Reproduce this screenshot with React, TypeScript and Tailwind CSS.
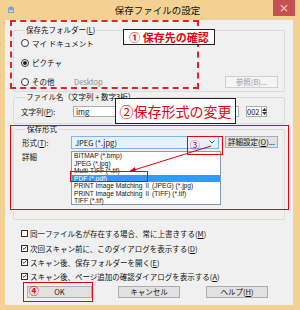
import React from "react";

function Radio({ checked }: { checked?: boolean }) {
  return (
    <span className="w-[8px] h-[8px] rounded-full border border-[#333] bg-white flex items-center justify-center shrink-0">
      {checked && <span className="w-[4px] h-[4px] rounded-full bg-[#222]" />}
    </span>
  );
}

function Check({ checked }: { checked?: boolean }) {
  return (
    <span className="w-[7px] h-[7px] border border-[#333] bg-white flex items-center justify-center shrink-0">
      {checked && (
        <svg width="6" height="6" viewBox="0 0 6 6">
          <path d="M0.8 3 L2.4 4.6 L5.3 1.2" stroke="#222" strokeWidth="1.1" fill="none" />
        </svg>
      )}
    </span>
  );
}

function Btn({ children, className = "" }: { children: React.ReactNode; className?: string }) {
  return (
    <div className={`h-[12px] flex items-center justify-center border bg-[#e1e1e1] border-[#adadad] text-[7.5px] leading-none ${className}`}>
      {children}
    </div>
  );
}

export default function App() {
  const items: React.ReactNode[] = [
    "BITMAP (*.bmp)",
    "JPEG (*.jpg)",
    "Multi-TIFF (*.tif)",
    "PDF (*.pdf)",
    <>
      PRINT Image Matching <span className="font-['Noto_Sans_CJK_JP',sans-serif] text-[6px]">Ⅱ</span> (JPEG) (*.jpg)
    </>,
    <>
      PRINT Image Matching <span className="font-['Noto_Sans_CJK_JP',sans-serif] text-[6px]">Ⅱ</span> (TIFF) (*.tif)
    </>,
    "TIFF (*.tif)",
  ];
  return (
    <div className="relative w-[300px] h-[310px] bg-[#f3d193] overflow-hidden text-[#111] font-['Noto_Sans_CJK_JP','Liberation_Sans',sans-serif]">
      {/* title bar */}
      <div className="h-[20px] flex items-start">
        <div className="pl-[7px] pt-[5px] w-[20px]">
          <svg width="8" height="9" viewBox="0 0 8 9">
            <path d="M1 8 L1 3 L4 1 L7 3 L7 8 Z" fill="#8aa2c0" />
            <path d="M2 6 L6 6" stroke="#fff" strokeWidth="1" />
          </svg>
        </div>
        <div className="flex-1 text-center text-[9.5px] leading-[20px] pl-[22px]">保存ファイルの設定</div>
        <div className="w-[22px] h-[16px] mr-[5px] bg-[#c75050] flex items-center justify-center text-white text-[10px] leading-none">
          ×
        </div>
      </div>

      {/* client */}
      <div className="ml-[5px] w-[288px] h-[285px] bg-[#f0f0f0] px-[8px] flex flex-col text-[7.5px] leading-[9px]">
        {/* group 1 */}
        <fieldset className="mt-[6px] border border-[#dcdcdc] rounded-[2px] pl-[7px] pr-[6px] pb-[1px]">
          <legend className="ml-[4px] px-[1px] leading-[8px]">保存先フォルダー(<u>L</u>)</legend>
          <div className="h-[18px] flex items-center gap-[3px]">
            <Radio />
            <span>マイ ドキュメント</span>
          </div>
          <div className="h-[21px] flex items-center gap-[3px]">
            <Radio checked />
            <span>ピクチャ</span>
          </div>
          <div className="h-[17px] flex items-center">
            <Radio />
            <span className="ml-[3px] w-[42px]">その他</span>
            <span className="text-[#8c8c8c]">Desktop</span>
            <Btn className="ml-auto w-[53px] bg-[#f4f4f4] border-[#d0d0d0] text-[#9a9a9a]">参照(B)...</Btn>
          </div>
        </fieldset>

        {/* group 2 */}
        <fieldset className="mt-[1px] border border-[#dcdcdc] rounded-[2px] pl-[7px] pr-[6px] pb-[5px]">
          <legend className="ml-[4px] px-[1px] leading-[8px]">ファイル名（文字列 + 数字3桁）</legend>
          <div className="h-[14px] mt-[3px] flex items-center">
            <span className="w-[52px]">文字列(<u>P</u>):</span>
            <div className="h-[11px] w-[166px] bg-white border border-[#abadb3] flex items-center pl-[2px]">img</div>
            <div className="ml-[7px] h-[11px] w-[21px] bg-white border border-[#abadb3] flex items-center">
              <span className="flex-1 text-right pr-[1px]">002</span>
              <div className="w-[7px] h-full border-l border-[#abadb3] flex flex-col items-center justify-center gap-[1px]">
                <svg width="5" height="3" viewBox="0 0 5 3">
                  <path d="M0 3 L2.5 0 L5 3 Z" fill="#333" />
                </svg>
                <svg width="5" height="3" viewBox="0 0 5 3">
                  <path d="M0 0 L2.5 3 L5 0 Z" fill="#333" />
                </svg>
              </div>
            </div>
          </div>
        </fieldset>

        {/* group 3 */}
        <fieldset className="mt-[1px] h-[95px] border border-[#dcdcdc] rounded-[2px] pl-[8px] pr-[6px]">
          <legend className="ml-[4px] px-[1px] leading-[8px]">保存形式</legend>
          <div className="h-[14px] mt-[2px] flex items-center">
            <span className="w-[49px]">形式(<u>T</u>):</span>
            <div className="h-[13px] w-[148px] bg-[#e5f1fb] border border-[#7eb4ea] flex items-center pl-[3px]">
              <span className="flex-1">JPEG (*.jpg)</span>
              <svg width="6" height="4" viewBox="0 0 6 4" className="mr-[3px]">
                <path d="M0.5 0.5 L3 3 L5.5 0.5" stroke="#333" strokeWidth="0.9" fill="none" />
              </svg>
            </div>
            <Btn className="ml-[6px] w-[53px]">詳細設定(<u>O</u>)...</Btn>
          </div>
          <div className="mt-[3px]">詳細</div>
        </fieldset>

        {/* checkboxes */}
        <div className="mt-[6px] pl-[8px] flex flex-col">
          <div className="h-[15px] flex items-center gap-[2px]">
            <Check />
            <span>同一ファイル名が存在する場合、常に上書きする(<u>M</u>)</span>
          </div>
          <div className="h-[14px] flex items-center gap-[2px]">
            <Check checked />
            <span>次回スキャン前に、このダイアログを表示する(<u>D</u>)</span>
          </div>
          <div className="h-[14px] flex items-center gap-[2px]">
            <Check checked />
            <span>スキャン後、保存フォルダーを開く(<u>E</u>)</span>
          </div>
          <div className="h-[14px] flex items-center gap-[2px]">
            <Check checked />
            <span>スキャン後、ページ追加の確認ダイアログを表示する(<u>A</u>)</span>
          </div>
        </div>

        {/* buttons */}
        <div className="mt-[3px] flex pl-[14px] gap-[26px]">
          <Btn className="w-[65px] border-[#3c7fb1]">OK</Btn>
          <Btn className="w-[62px]">キャンセル</Btn>
          <Btn className="w-[62px]">ヘルプ(<u>H</u>)</Btn>
        </div>
      </div>

      {/* dropdown list */}
      <div className="absolute left-[71px] top-[151px] w-[150px] h-[54px] bg-white border border-[#7f9db9] text-[6.6px] leading-[7.5px] font-['Liberation_Sans',sans-serif]">
        {items.map((it, i) => (
          <div
            key={i}
            className={`h-[7.5px] pl-[2px] whitespace-nowrap ${i === 3 ? "bg-[#3399ff] text-white" : ""}`}
          >
            {it}
          </div>
        ))}
      </div>

      {/* annotations */}
      <div className="absolute left-[10px] top-[20px] w-[189px] h-[69px] border-2 border-dashed border-[#e8202a]" />
      <div className="absolute left-[123px] top-[29px] w-[92px] h-[16px] bg-white border border-[#222] flex items-center justify-center text-[#e60012] font-bold text-[11px] leading-none">
        ① 保存先の確認
      </div>
      <div className="absolute left-[115px] top-[98px] w-[121px] h-[26px] bg-white border border-[#222] flex items-center justify-center text-[#e60012] text-[14px] leading-none">
        ②保存形式の変更
      </div>
      <div className="absolute left-[10px] top-[125px] w-[279px] h-[85px] border-[1.5px] border-[#e60012]" />
      <div className="absolute left-[187px] top-[136px] w-[36px] h-[19px] border-[1.5px] border-[#e60012]" />
      <div className="absolute left-[190px] top-[139px] text-[#e60012] text-[10px] leading-[12px]">③</div>
      <div className="absolute left-[70px] top-[171px] w-[78px] h-[11px] border-[1.5px] border-[#e60012]" />
      <svg className="absolute left-0 top-0" width="300" height="310">
        <line x1="211" y1="146" x2="134" y2="170" stroke="#e60012" strokeWidth="1" />
        <path d="M128 172 L135 167 L136 172 Z" fill="#e60012" />
      </svg>
      <div className="absolute left-[23px] top-[282px] w-[70px] h-[20px] border-[1.5px] border-[#e60012]" />
      <div className="absolute left-[29px] top-[285px] text-[#e60012] font-bold text-[10px] leading-[12px]">④</div>
    </div>
  );
}
